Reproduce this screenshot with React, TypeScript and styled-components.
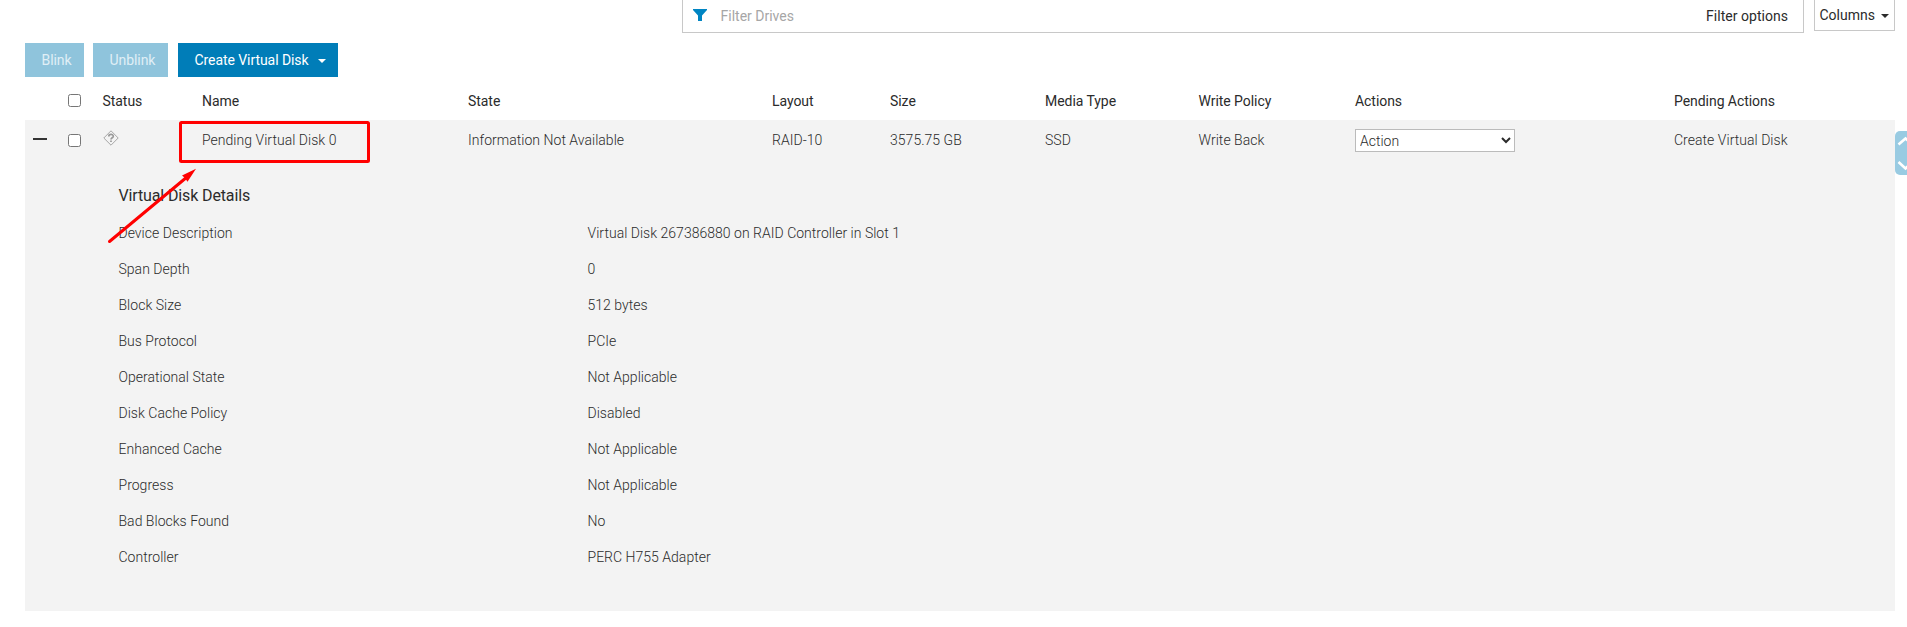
import React from 'react';
import styled, { createGlobalStyle } from 'styled-components';

const GlobalStyle = createGlobalStyle`
  html, body { margin: 0; background: #fff; overflow: hidden; }
  * { box-sizing: border-box; }
  body {
    font-family: Roboto, "Liberation Sans", sans-serif;
    font-size: 14px;
    line-height: 20px;
    color: #2b2b2b;
  }
  input, select, button { font-family: inherit; font-size: inherit; }
`;

const Page = styled.main`
  position: relative;
  height: 627px;
  padding: 0 12px 0 25px;
  overflow: hidden;
`;

const FilterBar = styled.div`
  display: flex;
  justify-content: flex-end;
  align-items: flex-start;
  gap: 10px;
  height: 43px;
`;

const FilterBox = styled.div`
  display: flex;
  align-items: flex-start;
  width: 1122px;
  height: 33px;
  padding: 6px 15px 0 10px;
  border: 1px solid #c8c8c8;
  border-top: 0;
`;

const FunnelIcon = styled.svg`
  width: 14px;
  height: 12px;
  margin-top: 3px;
`;

const FilterInput = styled.input`
  flex: 1;
  height: 20px;
  margin-left: 13.5px;
  padding: 0;
  border: 0;
  outline: 0;
  &::placeholder { color: #a6a6a6; opacity: 1; }
`;

const FilterOptions = styled.span`
  letter-spacing: 0.03px;
`;

const ColumnsButton = styled.div`
  display: flex;
  justify-content: space-between;
  width: 81px;
  height: 31px;
  padding: 5px 5px 0 4.5px;
  border: 1px solid #c8c8c8;
  border-top: 0;
`;

const Caret = styled.span`
  width: 0;
  height: 0;
  margin-top: 9px;
  border: 4px solid transparent;
  border-top-color: currentColor;
  border-bottom: 0;
`;

const Toolbar = styled.div`
  display: flex;
  height: 34px;
`;

const ToolButton = styled.button<{ $width: number; $gap?: number; $muted?: boolean }>`
  display: flex;
  width: ${p => p.$width}px;
  height: 34px;
  margin: 0 ${p => p.$gap ?? 0}px 0 0;
  padding: 7px 12px 0 16.5px;
  justify-content: space-between;
  align-items: flex-start;
  border: 0;
  line-height: 20px;
  letter-spacing: -0.07px;
  white-space: nowrap;
  color: ${p => (p.$muted ? '#e0eff6' : '#fff')};
  background: ${p => (p.$muted ? '#8fc4dc' : '#007db8')};
`;

const TableRow = styled.div`
  display: grid;
  grid-template-columns: 43px 34.5px 99.5px 266px 304px 118px 155px 153.5px 156.5px 319px 1fr;
`;

const HeaderRow = styled(TableRow)`
  height: 43px;
  padding-top: 14px;
  letter-spacing: -0.05px;
`;

const RowPanel = styled.section`
  height: 491px;
  background: #f3f3f3;
`;

const DataRow = styled(TableRow)`
  height: 62px;
  padding-top: 10px;
  font-weight: 300;
  letter-spacing: 0.03px;
`;

const Checkbox = styled.input`
  display: block;
  width: 13px;
  height: 13px;
  margin: 3px 0 0;
`;

const RowCheckbox = styled(Checkbox)`
  margin-top: 4px;
`;

const Collapse = styled.div`
  width: 14px;
  height: 2px;
  margin: 8px 0 0 8px;
  background: #333;
`;

const StatusIcon = styled.svg`
  width: 16px;
  height: 16px;
  margin-left: 0.5px;
`;

const ActionSelect = styled.select`
  display: block;
  width: 160px;
  height: 23px;
  margin-top: -1px;
  padding: 0;
  border: 1px solid #bbb;
  border-radius: 0;
  background: #fff;
  color: #2b2b2b;
  font-weight: 300;
`;

const DetailsTitle = styled.h2`
  margin: 0 0 9px 93.5px;
  font-size: 16px;
  font-weight: 400;
  line-height: 28px;
  letter-spacing: -0.13px;
`;

const DetailRow = styled.div`
  display: grid;
  grid-template-columns: 469px 1fr;
  height: 36px;
  margin-left: 93.5px;
  padding-top: 4px;
  font-weight: 300;
  letter-spacing: 0.02px;
`;

const Annotation = styled.svg`
  position: absolute;
  left: 0;
  top: 0;
  width: 400px;
  height: 260px;
  pointer-events: none;
`;

const ScrollTab = styled.div`
  position: absolute;
  top: 131px;
  right: -10px;
  width: 22px;
  height: 44px;
  border-radius: 5px;
  background: #99cbe2;
`;

const headers = ['Status', 'Name', 'State', 'Layout', 'Size', 'Media Type', 'Write Policy', 'Actions', 'Pending Actions'];

const details = [
  ['Device Description', 'Virtual Disk 267386880 on RAID Controller in Slot 1'],
  ['Span Depth', '0'],
  ['Block Size', '512 bytes'],
  ['Bus Protocol', 'PCIe'],
  ['Operational State', 'Not Applicable'],
  ['Disk Cache Policy', 'Disabled'],
  ['Enhanced Cache', 'Not Applicable'],
  ['Progress', 'Not Applicable'],
  ['Bad Blocks Found', 'No'],
  ['Controller', 'PERC H755 Adapter'],
];

export default function App() {
  return (
    <Page>
      <GlobalStyle />
      <FilterBar>
        <FilterBox>
          <FunnelIcon viewBox="0 0 14 12"><path d="M0 0H14V1L9 6.5V12H5V6.5L0 1Z" fill="#0085c3" /></FunnelIcon>
          <FilterInput placeholder="Filter Drives" />
          <FilterOptions>Filter options</FilterOptions>
        </FilterBox>
        <ColumnsButton>Columns<Caret /></ColumnsButton>
      </FilterBar>
      <Toolbar>
        <ToolButton $width={59} $gap={9} $muted>Blink</ToolButton>
        <ToolButton $width={75} $gap={10} $muted>Unblink</ToolButton>
        <ToolButton $width={160}>Create Virtual Disk<Caret /></ToolButton>
      </Toolbar>
      <HeaderRow>
        <span />
        <Checkbox type="checkbox" />
        {headers.map(h => <span key={h}>{h}</span>)}
      </HeaderRow>
      <RowPanel>
        <DataRow>
          <Collapse />
          <RowCheckbox type="checkbox" />
          <StatusIcon viewBox="0 0 16 16" fill="none" stroke="#a5a5a5">
            <path d="M8 .8 15.2 8 8 15.2 .8 8Z" strokeLinejoin="round" />
            <path d="M5.8 6.4C5.8 3.8 10.3 3.8 10.3 6.2C10.3 7.8 8 7.700 8 9.500M8 10.500V12" strokeWidth="1.700" stroke="#999" />
          </StatusIcon>
          <span>Pending Virtual Disk 0</span>
          <span>Information Not Available</span>
          <span>RAID-10</span>
          <span>3575.75 GB</span>
          <span>SSD</span>
          <span>Write Back</span>
          <ActionSelect><option>Action</option></ActionSelect>
          <span>Create Virtual Disk</span>
        </DataRow>
        <DetailsTitle>Virtual Disk Details</DetailsTitle>
        {details.map(([label, value]) => (
          <DetailRow key={label}><span>{label}</span><span>{value}</span></DetailRow>
        ))}
      </RowPanel>
      <Annotation viewBox="0 0 400 260">
        <rect x="180.5" y="122.5" width="188" height="39" rx="1" fill="none" stroke="#f00" strokeWidth="3" />
        <path d="M109.500 241.500 187 177" stroke="#f00" strokeWidth="3" strokeLinecap="round" />
        <path d="M196 168.700 182 175.500 185 178 187.500 181.700Z" fill="#f00" />
      </Annotation>
      <ScrollTab>
        <svg width="22" height="44" viewBox="0 0 22 44" fill="none" stroke="#fff" strokeWidth="2.6">
          <path d="M3.500 13.500 10.500 7.500 17.500 13.500M3.500 31 10.500 37.500 17.500 31" />
        </svg>
      </ScrollTab>
    </Page>
  );
}
